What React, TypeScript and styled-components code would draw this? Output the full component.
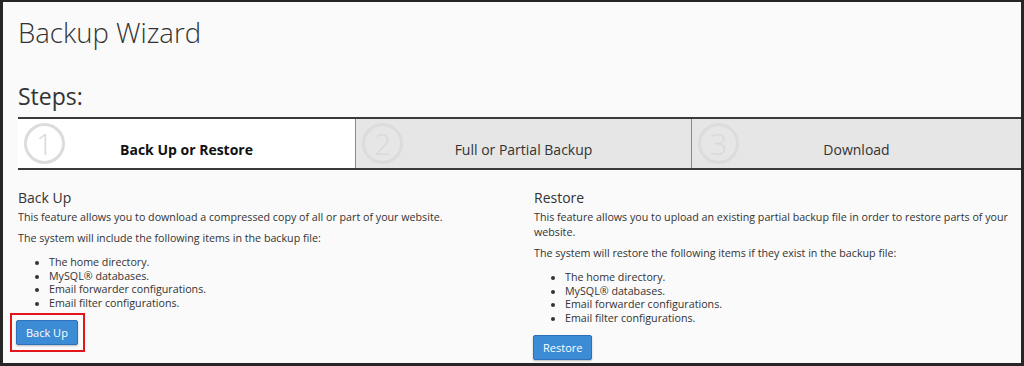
import * as React from "react";
import styled, { createGlobalStyle } from "styled-components";

const GlobalStyle = createGlobalStyle`
	html, body {
		margin: 0;
		padding: 0;
		background: #fafafa;
	}
	* {
		box-sizing: border-box;
	}
`;

const steps = [
	{ num: "1", label: "Back Up or Restore", active: true },
	{ num: "2", label: "Full or Partial Backup", active: false },
	{ num: "3", label: "Download", active: false }
];

const items = [
	"The home directory.",
	"MySQL® databases.",
	"Email forwarder configurations.",
	"Email filter configurations."
];

type StepProps = {
	active: boolean;
};

const App = () => {
	return (
		<>
			<GlobalStyle />
			<Frame>
				<Title>Backup Wizard</Title>
				<StepsTitle>Steps:</StepsTitle>
				<StepBar>
					{steps.map(step => (
						<Step key={step.num} active={step.active}>
							<StepNumber>{step.num}</StepNumber>
							<StepLabel active={step.active}>{step.label}</StepLabel>
						</Step>
					))}
				</StepBar>
				<Columns>
					<Column>
						<Heading>Back Up</Heading>
						<Text>
							This feature allows you to download a compressed copy of all or
							part of your website.
						</Text>
						<Text>
							The system will include the following items in the backup file:
						</Text>
						<List>
							{items.map(item => (
								<li key={item}>{item}</li>
							))}
						</List>
						<Highlight>
							<Button>Back Up</Button>
						</Highlight>
					</Column>
					<Column>
						<Heading>Restore</Heading>
						<Text>
							This feature allows you to upload an existing partial backup file
							in order to restore parts of your website.
						</Text>
						<Text>
							The system will restore the following items if they exist in the
							backup file:
						</Text>
						<List>
							{items.map(item => (
								<li key={item}>{item}</li>
							))}
						</List>
						<Button>Restore</Button>
					</Column>
				</Columns>
			</Frame>
		</>
	);
};

const Frame = styled.div`
	height: 366px;
	border: 3px solid #262626;
	border-top-width: 2px;
	padding: 0 0 0 15px;
	background: #fafafa;
	font-family: "Open Sans", "Liberation Sans", sans-serif;
	color: #333;
	overflow: hidden;
`;

const Title = styled.h1`
	margin: 14px 0 0 0;
	font-size: 27.5px;
	line-height: 34px;
	font-weight: 300;
	color: #333;
`;

const StepsTitle = styled.h2`
	margin: 31px 0 0 0;
	font-size: 23px;
	line-height: 30px;
	font-weight: 400;
	color: #333;
`;

const StepBar = styled.div`
	margin-top: 6px;
	display: grid;
	grid-template-columns: 337px 336px 1fr;
	height: 53px;
	border-top: 2px solid #3a3a3a;
	border-bottom: 2px solid #3a3a3a;
`;

const Step = styled.div<StepProps>`
	display: flex;
	align-items: center;
	position: relative;
	padding-left: 6px;
	background: ${props => (props.active ? "#ffffff" : "#e6e6e6")};
	border-left: ${props => (props.active ? "none" : "1px solid #8a8a8a")};
`;

const StepNumber = styled.span`
	width: 41px;
	height: 41px;
	flex: none;
	border: 3px solid #dcdcdc;
	border-radius: 50%;
	display: flex;
	align-items: center;
	justify-content: center;
	font-size: 30px;
	font-weight: 300;
	line-height: 1;
	color: #d9d9d9;
	padding-top: 1px;
`;

const StepLabel = styled.span<StepProps>`
	position: absolute;
	left: 0;
	right: 0;
	top: 23px;
	text-align: center;
	font-size: 14px;
	line-height: 16px;
	font-weight: ${props => (props.active ? 700 : 400)};
	color: ${props => (props.active ? "#111" : "#333")};
`;

const Columns = styled.div`
	display: grid;
	grid-template-columns: 516px 1fr;
	padding-right: 2px;
	margin-top: 18px;
`;

const Column = styled.div`
	display: flex;
	flex-direction: column;
	align-items: flex-start;
`;

const Heading = styled.h3`
	margin: 0 0 2px 0;
	font-size: 14px;
	line-height: 20px;
	font-weight: 400;
	color: #333;
`;

const Text = styled.p`
	margin: 0 0 6px 0;
	font-size: 10.7px;
	line-height: 15px;
	color: #333;
`;

const List = styled.ul`
	margin: 4px 0 9px 0;
	padding-left: 31px;
	font-size: 10.7px;
	line-height: 13.7px;
	color: #333;
`;

const Highlight = styled.div`
	display: inline-flex;
	margin: -7px 0 0 -8px;
	padding: 5px;
	border: 2px solid #e3161b;
`;

const Button = styled.button`
	height: 25px;
	padding: 0 9px;
	margin-left: -1px;
	font-family: inherit;
	font-size: 11px;
	color: #fff;
	background: #3b8bd5;
	border: 1px solid #2d72b8;
	border-radius: 2px;
	box-shadow: 0 1px 2px rgba(0, 0, 0, 0.25);
	cursor: pointer;
`;

export default App;
